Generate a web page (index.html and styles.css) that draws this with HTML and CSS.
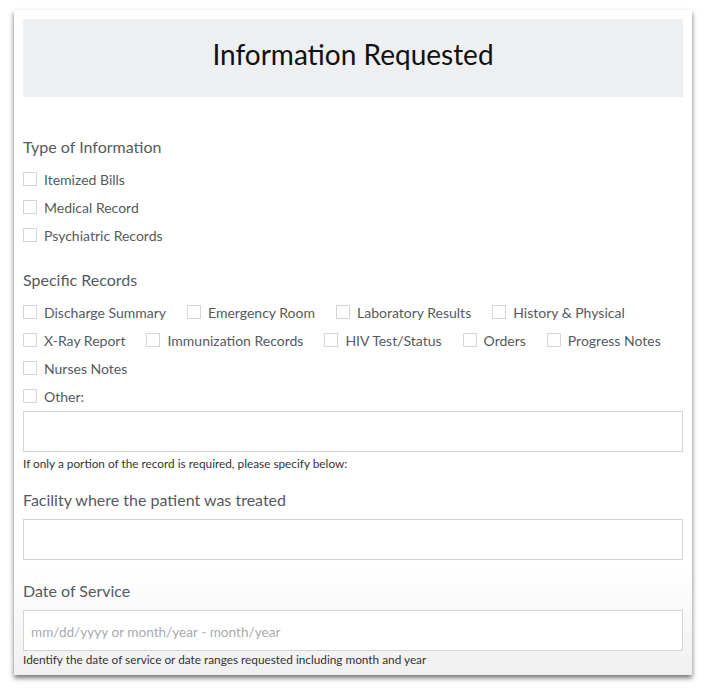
FILE: index.html
```html
<!DOCTYPE html>
<html>
<head>
<meta charset="utf-8">
<link rel="stylesheet" href="styles.css">
</head>
<body>
<div class="card">
  <div class="header"><h1 class="title">Information Requested</h1></div>

  <div class="section-label first">Type of Information</div>
  <div class="stack">
    <label class="check"><span class="box"></span>Itemized Bills</label>
    <label class="check"><span class="box"></span>Medical Record</label>
    <label class="check"><span class="box"></span>Psychiatric Records</label>
  </div>

  <div class="section-label second">Specific Records</div>
  <div class="stack">
    <div class="inline">
      <label class="check"><span class="box"></span>Discharge Summary</label>
      <label class="check"><span class="box"></span>Emergency Room</label>
      <label class="check"><span class="box"></span>Laboratory Results</label>
      <label class="check"><span class="box"></span>History &amp; Physical</label>
    </div>
    <div class="inline">
      <label class="check"><span class="box"></span>X-Ray Report</label>
      <label class="check"><span class="box"></span>Immunization Records</label>
      <label class="check"><span class="box"></span>HIV Test/Status</label>
      <label class="check"><span class="box"></span>Orders</label>
      <label class="check"><span class="box"></span>Progress Notes</label>
    </div>
    <div class="inline">
      <label class="check"><span class="box"></span>Nurses Notes</label>
    </div>
    <div class="inline">
      <label class="check"><span class="box"></span>Other:</label>
    </div>
  </div>
  <div class="field"></div>
  <div class="help">If only a portion of the record is required, please specify below:</div>

  <div class="section-label">Facility where the patient was treated</div>
  <div class="field"></div>

  <div class="section-label date">Date of Service</div>
  <div class="field"><span class="placeholder">mm/dd/yyyy or month/year - month/year</span></div>
  <div class="help last">Identify the date of service or date ranges requested including month and year</div>
</div>
</body>
</html>
```
FILE: styles.css
```css
html, body {
  margin: 0;
  padding: 0;
  background: #ffffff;
}
body {
  font-family: Lato, "Open Sans", Arial, sans-serif;
  width: 706px;
  height: 693px;
  overflow: hidden;
}
.card {
  margin: 10px 0 0 14px;
  width: 678px;
  box-sizing: border-box;
  padding: 9px 9px 8px 9px;
  background: linear-gradient(to bottom, #ffffff 0%, #ffffff 84%, #f0f0f0 100%);
  box-shadow: 0 3px 5px rgba(0,0,0,0.55);
  display: flex;
  flex-direction: column;
}
.header {
  height: 78px;
  box-sizing: border-box;
  padding-top: 19px;
  background: #eeeff1;
  display: flex;
  align-items: flex-start;
  justify-content: center;
}
.title {
  margin: 0;
  font-family: Lato, Arial, sans-serif;
  font-weight: 400;
  font-size: 28px;
  color: #111111;
  line-height: 32px;
}
.section-label {
  font-size: 16px;
  line-height: 20px;
  height: 20px;
  color: #555a60;
  margin-top: 19px;
  margin-bottom: 9px;
}
.section-label.first {
  margin-top: 40px;
  margin-bottom: 8px;
}
.section-label.second {
  margin-top: 21px;
  margin-bottom: 8px;
}
.section-label.date {
  margin-top: 21px;
}
.stack {
  display: flex;
  flex-direction: column;
}
.inline {
  display: flex;
  flex-direction: row;
  gap: 21px;
}
.check {
  display: flex;
  align-items: center;
  height: 28px;
  font-size: 14px;
  color: #555a60;
}
.box {
  width: 12px;
  height: 12px;
  border: 1px solid #d3d5d8;
  background: #fff;
  margin-right: 7px;
  flex: none;
}
.field {
  height: 41px;
  box-sizing: border-box;
  border: 1px solid #d3d5d8;
  background: #fff;
  display: flex;
  align-items: center;
  padding: 2px 0 0 7px;
}
.stack + .field {
  margin-top: 1px;
}
.placeholder {
  font-size: 13.6px;
  color: #a8abae;
}
.help {
  font-size: 11.8px;
  line-height: 15px;
  color: #333333;
  margin-top: 4px;
}
.help.last {
  margin-top: 1px;
}
```
